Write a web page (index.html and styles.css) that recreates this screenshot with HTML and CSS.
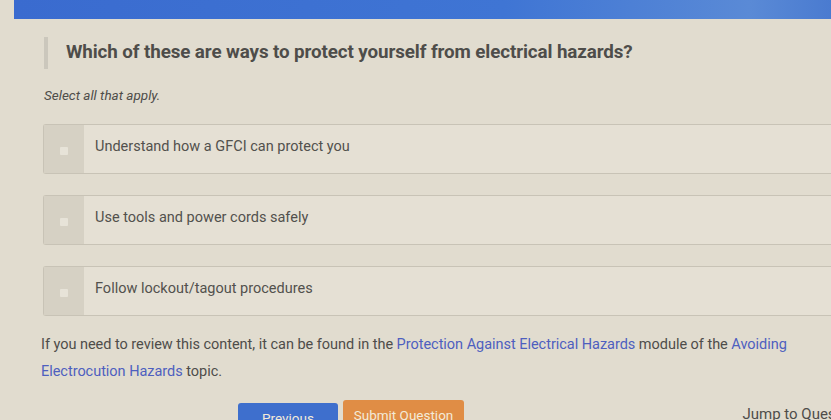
FILE: index.html
```html
<!DOCTYPE html>
<html>
<head>
<meta charset="utf-8">
<link rel="stylesheet" href="styles.css">
</head>
<body>
<div class="topbar"></div>
<main class="main">
  <h1 class="question">Which of these are ways to protect yourself from electrical hazards?</h1>
  <p class="hint">Select all that apply.</p>
  <div class="options">
    <label class="option"><span class="check"><span class="box"></span></span><span class="label">Understand how a GFCI can protect you</span></label>
    <label class="option"><span class="check"><span class="box"></span></span><span class="label">Use tools and power cords safely</span></label>
    <label class="option"><span class="check"><span class="box"></span></span><span class="label">Follow lockout/tagout procedures</span></label>
  </div>
  <p class="review">If you need to review this content, it can be found in the <span class="link">Protection Against Electrical Hazards</span> module of the <span class="link">Avoiding Electrocution Hazards</span> topic.</p>
  <div class="actions">
    <div class="buttons">
      <button class="btn prev">Previous</button>
      <button class="btn submit">Submit Question</button>
    </div>
    <span class="jump">Jump to Question</span>
  </div>
</main>
</body>
</html>
```
FILE: styles.css
```css
html, body {
  margin: 0;
  padding: 0;
  background: #e1dccf;
  font-family: Roboto, "Liberation Sans", sans-serif;
  color: #555450;
  overflow: hidden;
  width: 831px;
  height: 420px;
}
.topbar {
  margin-left: 14px;
  height: 19px;
  background: linear-gradient(90deg, #3a6bcf 0%, #3f75d4 60%, #5a8ad6 90%, #4a7bd0 100%);
}
.main {
  padding-left: 43px;
}
.question {
  margin: 18px 0 0 1px;
  padding: 5px 0 7px 18px;
  border-left: 4px solid #cbc7bc;
  font-size: 18.8px;
  font-weight: 700;
  color: #4e4d4a;
  line-height: 20px;
  letter-spacing: -0.1px;
}
.hint {
  margin: 18px 0 0 1px;
  font-style: italic;
  font-size: 13.5px;
  color: #4e4d4a;
  line-height: 16px;
}
.options {
  margin-top: 21px;
  display: flex;
  flex-direction: column;
  gap: 21px;
}
.option {
  display: flex;
  height: 48px;
  border: 1px solid #c8c3b6;
  border-right: none;
  border-radius: 3px 0 0 3px;
  background: #e5e0d4;
}
.check {
  width: 40px;
  background: #d6d1c4;
  display: flex;
  align-items: flex-start;
  justify-content: center;
  padding-top: 22px;
  box-sizing: border-box;
}
.box {
  width: 8px;
  height: 8px;
  background: #e7e3d8;
  border-radius: 1px;
}
.label {
  padding-left: 11px;
  padding-top: 13px;
  font-size: 14.5px;
  color: #52514d;
}
.review {
  margin: 15px 0 0 -2px;
  font-size: 14.5px;
  line-height: 27px;
  color: #4e4d4a;
  letter-spacing: -0.03px;
  width: 780px;
}
.link {
  color: #4e5fbf;
}
.actions {
  margin-top: 15px;
  display: flex;
  align-items: flex-start;
}
.buttons {
  margin-left: 195px;
  display: flex;
  gap: 5px;
  align-items: flex-start;
}
.btn {
  border: none;
  border-radius: 3px;
  font-family: Roboto, "Liberation Sans", sans-serif;
  font-size: 13.5px;
  color: #f3ead8;
  height: 30px;
  padding: 0;
  white-space: nowrap;
}
.prev {
  margin-top: 3px;
  width: 100px;
  background: #3e6fcd;
}
.submit {
  width: 121px;
  background: #e08d45;
}
.jump {
  margin-left: auto;
  margin-top: 5px;
  margin-right: -30px;
  flex-shrink: 0;
  font-size: 15px;
  color: #4e4d4a;
  white-space: nowrap;
}
```
